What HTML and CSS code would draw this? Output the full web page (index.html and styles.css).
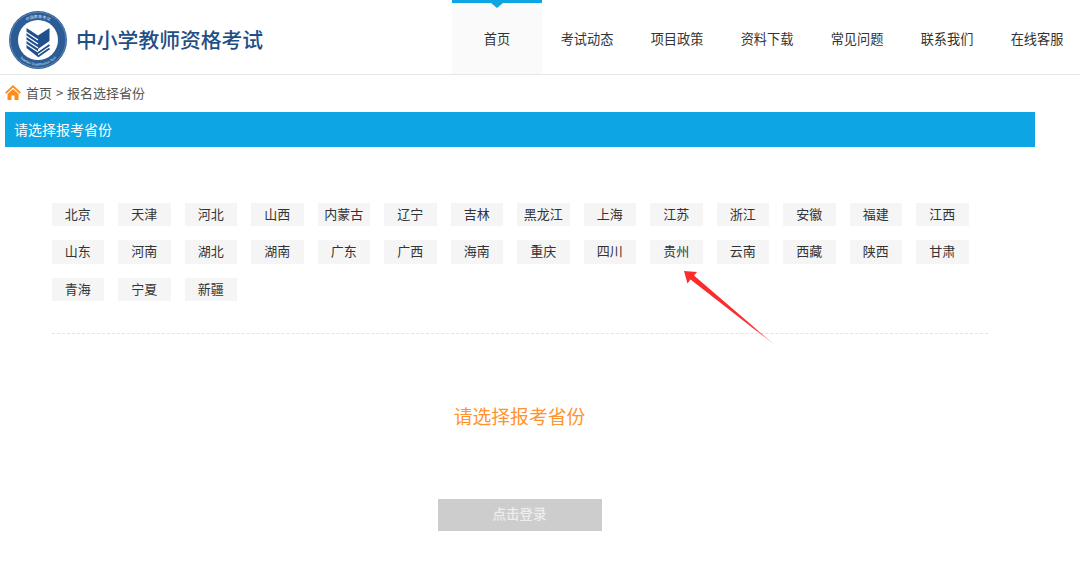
FILE: index.html
```html
<!DOCTYPE html>
<html>
<head>
  <title>中小学教师资格考试</title>
  <link rel="stylesheet" href="styles.css">
</head>
<body>
  <div class="header">
    <div class="brand">
      <svg class="logo" width="60" height="60" viewBox="0 0 60 60">
        <defs>
          <path id="ringTop" d="M8 30 A22 22 0 0 1 52 30"></path>
          <path id="ringBottom" d="M4.5 30 A25.500 25.500 0 0 0 55.500 30"></path>
        </defs>
        <circle cx="30" cy="30" r="29" fill="#2b5c96"></circle>
        <circle cx="30" cy="30" r="27.800" fill="none" stroke="#7f9fc4" stroke-width="0.600"></circle>
        <text class="ring-cn"><textPath href="#ringTop" startOffset="50%" text-anchor="middle">中国教育考试</textPath></text>
        <text class="ring-en"><textPath href="#ringBottom" startOffset="50%" text-anchor="middle">Teacher Qualification Test</textPath></text>
        <circle cx="30" cy="30" r="20" fill="#fff"></circle>
        <path fill="#1f4f8c" d="M18.500 18 L30 25.500 L30 47 L18.500 38 Z"></path>
        <path fill="#1f4f8c" d="M30 25.500 L41.500 18 L41.500 31 L30 39 Z"></path>
        <path fill="none" stroke="#fff" stroke-width="1.300" d="M18 22 L30 30 M18 26 L30 34 M18 30 L30 38 M18 34 L30 42"></path>
        <path fill="none" stroke="#1f4f8c" stroke-width="1.800" d="M30 43 L41.500 35 M30 46.500 L41.500 38.500"></path>
      </svg>
      <span class="brand-name">中小学教师资格考试</span>
    </div>
    <ul class="nav">
      <li class="active">首页</li>
      <li>考试动态</li>
      <li>项目政策</li>
      <li>资料下载</li>
      <li>常见问题</li>
      <li>联系我们</li>
      <li>在线客服</li>
    </ul>
  </div>

  <div class="crumbs">
    <svg class="home-icon" width="16" height="15" viewBox="0 0 16 15">
      <path fill="#ff8c1a" d="M8 0 L16 7.500 L14.600 8.800 L8 2.600 L1.400 8.800 L0 7.500 Z"></path>
      <path fill="#ff8c1a" d="M8 4 L13.500 9 L13.500 15 L9.500 15 L9.500 10.500 L6.500 10.500 L6.500 15 L2.500 15 L2.500 9 Z"></path>
    </svg>
    <span class="crumb-text">首页 &gt; 报名选择省份</span>
  </div>

  <div class="title-bar">请选择报考省份</div>

  <div class="content">
    <div class="provinces">
      <a>北京</a><a>天津</a><a>河北</a><a>山西</a><a>内蒙古</a><a>辽宁</a><a>吉林</a>
      <a>黑龙江</a><a>上海</a><a>江苏</a><a>浙江</a><a>安徽</a><a>福建</a><a>江西</a>
      <a>山东</a><a>河南</a><a>湖北</a><a>湖南</a><a>广东</a><a>广西</a><a>海南</a>
      <a>重庆</a><a>四川</a><a>贵州</a><a>云南</a><a>西藏</a><a>陕西</a><a>甘肃</a>
      <a>青海</a><a>宁夏</a><a>新疆</a>
    </div>
    <div class="tip">请选择报考省份</div>
    <button class="login-btn">点击登录</button>
  </div>

  <svg class="arrow" width="100" height="85" viewBox="0 0 100 85">
    <defs>
      <linearGradient id="arrowFade" x1="0" y1="0" x2="1" y2="1">
        <stop offset="0.750" stop-color="#fb2c2c"></stop>
        <stop offset="1" stop-color="#fb2c2c" stop-opacity="0.350"></stop>
      </linearGradient>
    </defs>
    <path fill="url(#arrowFade)" d="M4 5 L17 6 L14 9.500 L96 80 L10.500 13.500 L7.500 17.500 Z"></path>
  </svg>
</body>
</html>
```

FILE: styles.css
```css
* {
  box-sizing: border-box;
}
body {
  margin: 0;
  height: 562px;
  overflow: hidden;
  position: relative;
  background-color: #fff;
  font-family: "Noto Sans CJK SC", "Liberation Sans", sans-serif;
  color: #333;
}
.header {
  display: flex;
  justify-content: space-between;
  height: 75px;
  padding-left: 8px;
  border-bottom: 1px solid #e6e6e6;
}
.brand {
  display: flex;
  align-items: center;
  gap: 8px;
  padding-top: 5px;
}
.logo {
  display: block;
}
.ring-cn {
  font-size: 4px;
  fill: #dfe8f3;
}
.ring-en {
  font-size: 3.500px;
  fill: #dfe8f3;
  font-family: "Liberation Sans", sans-serif;
}
.brand-name {
  margin-top: -1px;
  font-size: 20.800px;
  font-weight: 500;
  color: #1f4f85;
}
.nav {
  display: flex;
  flex: none;
  width: 628px;
  margin: 0;
  padding: 0;
  list-style: none;
}
.nav li {
  flex: none;
  width: 90px;
  padding-top: 29px;
  text-align: center;
  font-size: 13.200px;
  line-height: 20px;
  color: #333;
}
.nav li.active {
  position: relative;
  height: 74px;
  border-top: 3px solid #0ea5e4;
  padding-top: 26px;
  background-color: #fafafa;
}
.nav li.active::before {
  content: "";
  position: absolute;
  top: 0;
  left: 39px;
  border-left: 6px solid transparent;
  border-right: 6px solid transparent;
  border-top: 5px solid #0ea5e4;
}
.crumbs {
  display: flex;
  align-items: center;
  gap: 5px;
  height: 37px;
  padding-left: 5px;
  font-size: 13px;
  color: #555;
}
.crumb-text {
  margin-top: -2px;
  word-spacing: 1px;
}
.home-icon {
  display: block;
  margin-top: -3px;
}
.title-bar {
  width: 1030px;
  height: 35px;
  margin-left: 5px;
  padding-left: 9px;
  background-color: #0ea5e4;
  color: #fff;
  font-size: 14px;
  line-height: 34px;
}
.content {
  width: 936px;
  margin-left: 51.500px;
  padding-top: 55.500px;
}
.provinces {
  display: grid;
  grid-template-columns: repeat(14, 52.500px);
  grid-auto-rows: 23.500px;
  gap: 14px;
  width: 936px;
  padding-bottom: 32px;
  border-bottom: 1px dashed #e4e4e4;
}
.provinces a {
  background-color: #f5f5f5;
  font-size: 13px;
  line-height: 22.500px;
  text-align: center;
  color: #333;
}
.tip {
  margin-top: 68px;
  text-align: center;
  font-size: 18.800px;
  line-height: 28px;
  color: #ff9330;
}
.login-btn {
  display: block;
  width: 164px;
  height: 32px;
  margin: 68.500px auto 0;
  padding-bottom: 4px;
  border: none;
  background-color: #cdcdcd;
  color: #eee;
  font-family: inherit;
  font-size: 13.500px;
  font-weight: 500;
}
.arrow {
  position: absolute;
  left: 680px;
  top: 266px;
}
```
